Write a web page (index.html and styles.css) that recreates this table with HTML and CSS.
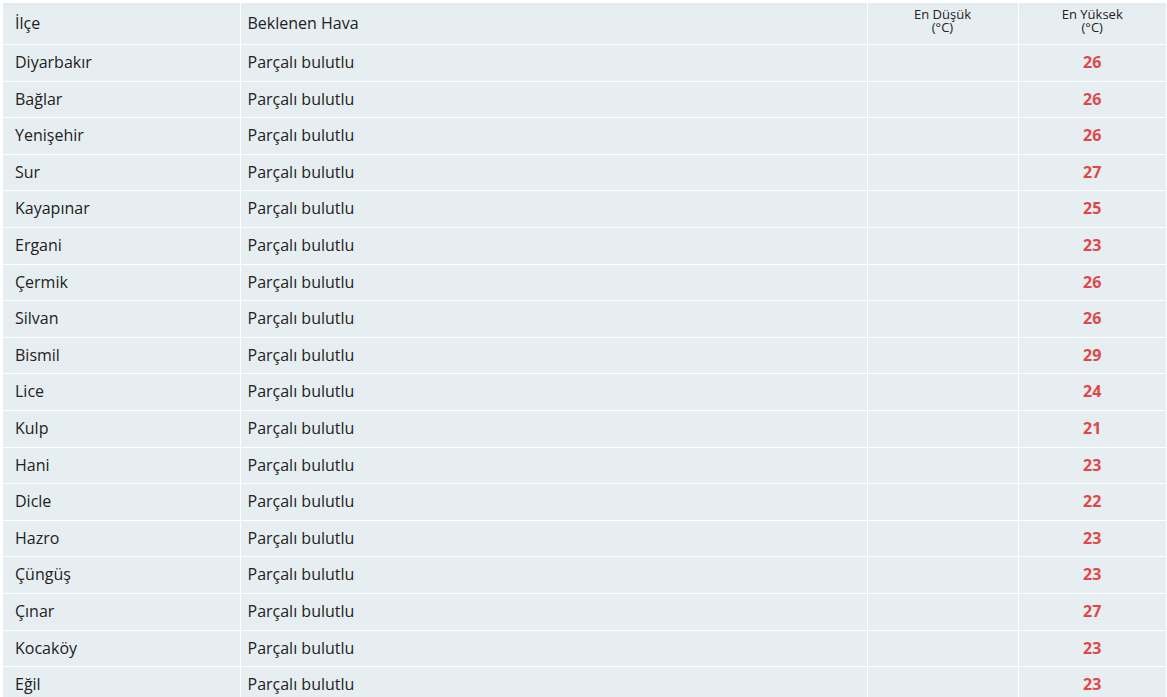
FILE: index.html
```html
<!DOCTYPE html>
<html lang="tr">
<head>
    <meta charset="UTF-8">
    <title>İlçe Hava Durumu</title>
    <link rel="stylesheet" href="styles.css">
</head>
<body>
    <table class="forecast">
        <colgroup>
            <col class="col-district">
            <col class="col-weather">
            <col class="col-min">
            <col class="col-max">
        </colgroup>
        <thead>
            <tr>
                <th class="district">İlçe</th>
                <th>Beklenen Hava</th>
                <th class="small">En Düşük<br>(°C)</th>
                <th class="small">En Yüksek<br>(°C)</th>
            </tr>
        </thead>
        <tbody>
            <tr><td class="district">Diyarbakır</td><td>Parçalı bulutlu</td><td></td><td class="max">26</td></tr>
            <tr><td class="district">Bağlar</td><td>Parçalı bulutlu</td><td></td><td class="max">26</td></tr>
            <tr><td class="district">Yenişehir</td><td>Parçalı bulutlu</td><td></td><td class="max">26</td></tr>
            <tr><td class="district">Sur</td><td>Parçalı bulutlu</td><td></td><td class="max">27</td></tr>
            <tr><td class="district">Kayapınar</td><td>Parçalı bulutlu</td><td></td><td class="max">25</td></tr>
            <tr><td class="district">Ergani</td><td>Parçalı bulutlu</td><td></td><td class="max">23</td></tr>
            <tr><td class="district">Çermik</td><td>Parçalı bulutlu</td><td></td><td class="max">26</td></tr>
            <tr><td class="district">Silvan</td><td>Parçalı bulutlu</td><td></td><td class="max">26</td></tr>
            <tr><td class="district">Bismil</td><td>Parçalı bulutlu</td><td></td><td class="max">29</td></tr>
            <tr><td class="district">Lice</td><td>Parçalı bulutlu</td><td></td><td class="max">24</td></tr>
            <tr><td class="district">Kulp</td><td>Parçalı bulutlu</td><td></td><td class="max">21</td></tr>
            <tr><td class="district">Hani</td><td>Parçalı bulutlu</td><td></td><td class="max">23</td></tr>
            <tr><td class="district">Dicle</td><td>Parçalı bulutlu</td><td></td><td class="max">22</td></tr>
            <tr><td class="district">Hazro</td><td>Parçalı bulutlu</td><td></td><td class="max">23</td></tr>
            <tr><td class="district">Çüngüş</td><td>Parçalı bulutlu</td><td></td><td class="max">23</td></tr>
            <tr><td class="district">Çınar</td><td>Parçalı bulutlu</td><td></td><td class="max">27</td></tr>
            <tr><td class="district">Kocaköy</td><td>Parçalı bulutlu</td><td></td><td class="max">23</td></tr>
            <tr><td class="district">Eğil</td><td>Parçalı bulutlu</td><td></td><td class="max">23</td></tr>
        </tbody>
    </table>
</body>
</html>
```
FILE: styles.css
```css
body {
    margin: 0;
    padding: 3px 1px 0 3px;
    background: #fff;
    font-family: "Open Sans", "Noto Sans", sans-serif;
    color: #222;
}
.forecast {
    width: 1163px;
    border-collapse: collapse;
    table-layout: fixed;
    background: #e7eef1;
}
.col-district { width: 237px; }
.col-weather { width: 627px; }
.col-min { width: 151px; }
.col-max { width: 148px; }
.forecast th,
.forecast td {
    border: 1px solid #fff;
    padding: 7px 7px;
    font-size: 16px;
    line-height: 21.6px;
    text-align: left;
    font-weight: normal;
    vertical-align: middle;
}
.forecast tr:first-child th,
.forecast tr:first-child td {
    border-top: none;
}
.forecast th:first-child,
.forecast td:first-child {
    border-left: none;
}
.forecast th:last-child,
.forecast td:last-child {
    border-right: none;
}
.forecast thead th {
    height: 25px;
    padding-top: 8px;
    padding-bottom: 7px;
    background: linear-gradient(#e3eaed, #e7eef1 8px);
}
.forecast thead th.district {
    height: 26px;
}
.forecast .district {
    padding-left: 12px;
}
.forecast th.small {
    font-size: 13px;
    line-height: 13px;
    text-align: center;
    vertical-align: top;
    padding-top: 5px;
}
.forecast td.max {
    text-align: center;
    font-weight: bold;
    color: #e04848;
}
```
